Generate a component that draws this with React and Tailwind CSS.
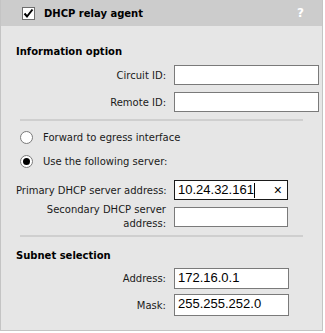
export default function App(){
    const row = "flex items-center pl-[15px]"
    const label = "w-[151px] shrink-0 text-right pr-[1px]"
    const input = "h-[20px] border border-[#7a7a7a] bg-white ml-[7px] px-[3px] text-[13px] leading-[18px] text-black"
    return (
        <div className="w-[325px] h-[333px] bg-white" style={{fontFamily: '"DejaVu Sans", Verdana, sans-serif'}}>
            <div className="w-[323px] h-[331px] bg-[#e6e6e6] border border-t-0 border-[#c4c4c4] flex flex-col text-[10px] text-[#1a1a1a]">
                <div className="h-[26px] bg-[#cccccc] flex items-center pl-[21px] pr-[18px] shrink-0">
                    <span className="w-[13px] h-[13px] bg-white border border-[#6e6e6e] flex items-center justify-center">
                        <svg width="11" height="11" viewBox="0 0 11 11">
                            <path d="M1.5 5.5 L4 8.5 L9.5 1.5" fill="none" stroke="#000" strokeWidth="2"/>
                        </svg>
                    </span>
                    <span className="ml-[9px] font-bold text-black">DHCP relay agent</span>
                    <span className="ml-auto font-bold text-white text-[12px]">?</span>
                </div>

                <div className="pl-[15px] mt-[19px] font-bold leading-[13px] text-black">Information option</div>

                <div className={row + " mt-[7px]"}>
                    <div className={label}>Circuit ID:</div>
                    <div className={input + " w-[145px]"}></div>
                </div>
                <div className={row + " mt-[7px]"}>
                    <div className={label}>Remote ID:</div>
                    <div className={input + " w-[145px]"}></div>
                </div>

                <div className="ml-[19px] w-[283px] h-[2px] bg-[#cfcfcf] mt-[7px]"></div>

                <div className="flex items-center pl-[19px] mt-[10px] h-[13px]">
                    <span className="w-[13px] h-[13px] rounded-full bg-white border border-[#7a7a7a]"></span>
                    <span className="ml-[10px]">Forward to egress interface</span>
                </div>
                <div className="flex items-center pl-[19px] mt-[11px] h-[13px]">
                    <span className="w-[13px] h-[13px] rounded-full bg-white border border-[#7a7a7a] flex items-center justify-center">
                        <span className="w-[7px] h-[7px] rounded-full bg-black"></span>
                    </span>
                    <span className="ml-[10px]">Use the following server:</span>
                </div>

                <div className={row + " mt-[12px]"}>
                    <div className={label + " whitespace-nowrap"}>Primary DHCP server address:</div>
                    <div className="h-[20px] w-[114px] border border-[#1a1a1a] bg-white ml-[7px] pl-[3px] pr-[5px] flex items-center text-[13px] text-black" style={{fontFamily: '"Liberation Sans", Arial, sans-serif'}}>
                        <span>10.24.32.161</span>
                        <span className="w-[1px] h-[15px] bg-black"></span>
                        <span className="ml-auto text-[14px]">×</span>
                    </div>
                </div>
                <div className={row + " mt-[3px]"}>
                    <div className={label + " leading-[14px]"}>Secondary DHCP server<br/>address:</div>
                    <div className={input + " w-[114px]"}></div>
                </div>

                <div className="ml-[19px] w-[283px] h-[2px] bg-[#cfcfcf] mt-[4px]"></div>

                <div className="pl-[15px] mt-[12px] font-bold leading-[13px] text-black">Subnet selection</div>

                <div className={row + " mt-[6px]"}>
                    <div className={label}>Address:</div>
                    <div className={input + " w-[115px] h-[21px]"} style={{fontFamily: '"Liberation Sans", Arial, sans-serif'}}>172.16.0.1</div>
                </div>
                <div className={row + " mt-[5px]"}>
                    <div className={label}>Mask:</div>
                    <div className={input + " w-[115px] h-[22px]"} style={{fontFamily: '"Liberation Sans", Arial, sans-serif'}}>255.255.252.0</div>
                </div>
            </div>
        </div>
    )
}
